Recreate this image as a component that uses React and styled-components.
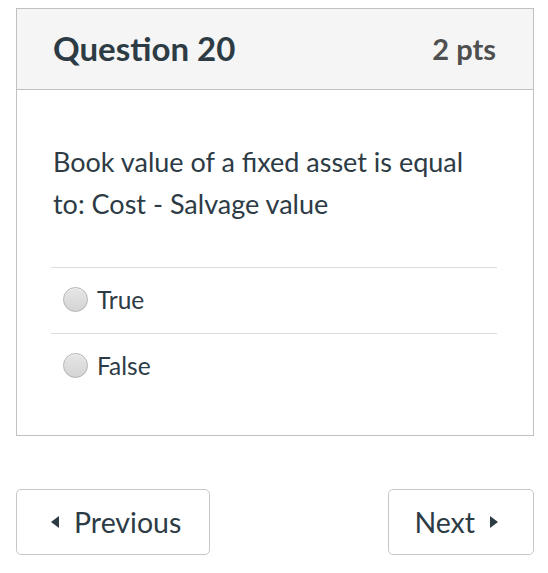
import React from "react";
import styled, { createGlobalStyle } from "styled-components";

const Global = createGlobalStyle`
  html, body { margin: 0; padding: 0; background: #fff; }
  body { font-family: Lato, "Open Sans", sans-serif; color: #2d3b45; }
`;

const Page = styled.div`
  padding: 8px 14px 0 16px;
`;

const Card = styled.section`
  border: 1px solid #c1c1c1;
  background: #fff;
`;

const Header = styled.header`
  display: flex;
  align-items: center;
  justify-content: space-between;
  height: 80px;
  padding: 0 37px 0 36px;
  background: #f5f5f5;
  border-bottom: 1px solid #c1c1c1;
`;

const Title = styled.h2`
  margin: 0 0 2px;
  font-size: 33px;
  font-weight: 700;
  color: #2d3b45;
`;

const Points = styled.span`
  margin-bottom: 2px;
  font-size: 29px;
  font-weight: 700;
  color: #4f4f4f;
`;

const Body = styled.div`
  padding: 51px 36px 36px 34px;
`;

const QuestionText = styled.p`
  margin: 0 0 42px 2px;
  font-size: 27px;
  line-height: 42px;
`;

const Answers = styled.div`
  border-top: 1px solid #dcdcdc;
`;

const Answer = styled.label`
  display: flex;
  align-items: center;
  gap: 9px;
  height: 63px;
  padding: 0 0 2px 12px;
  font-size: 24.5px;
  color: #2d3b45;
  & + & { border-top: 1px solid #dcdcdc; }
`;

const Radio = styled.span`
  width: 23px;
  height: 23px;
  border-radius: 50%;
  border: 1px solid #b3b3b3;
  background: linear-gradient(#e6e6e6, #d4d4d4);
  box-shadow: inset 0 1px 0 rgba(255,255,255,0.6);
`;

const Nav = styled.nav`
  display: flex;
  justify-content: space-between;
  margin-top: 53px;
`;

const NavButton = styled.button`
  display: flex;
  align-items: center;
  gap: 14px;
  height: 66px;
  padding: ${(p) => (p.$next ? "0 35px 0 25px" : "0 28px 0 34px")};
  border: 1px solid #c7c7c7;
  border-radius: 5px;
  background: #fff;
  font-family: Lato, "Open Sans", sans-serif;
  font-size: 28.5px;
  color: #2d3b45;
`;

const Caret = ({ dir }) => (
  <svg width="9" height="12" viewBox="0 0 9 12">
    {dir === "left" ? (
      <path d="M8 0 L8 12 L0 6 Z" fill="#2d3b45" />
    ) : (
      <path d="M1 0 L1 12 L9 6 Z" fill="#2d3b45" />
    )}
  </svg>
);

export default function App() {
  return (
    <Page>
      <Global />
      <Card>
        <Header>
          <Title>Question 20</Title>
          <Points>2 pts</Points>
        </Header>
        <Body>
          <QuestionText>
            Book value of a fixed asset is equal to: Cost - Salvage value
          </QuestionText>
          <Answers>
            <Answer>
              <Radio />
              True
            </Answer>
            <Answer>
              <Radio />
              False
            </Answer>
          </Answers>
        </Body>
      </Card>
      <Nav>
        <NavButton>
          <Caret dir="left" />
          Previous
        </NavButton>
        <NavButton $next>
          Next
          <Caret dir="right" />
        </NavButton>
      </Nav>
    </Page>
  );
}
